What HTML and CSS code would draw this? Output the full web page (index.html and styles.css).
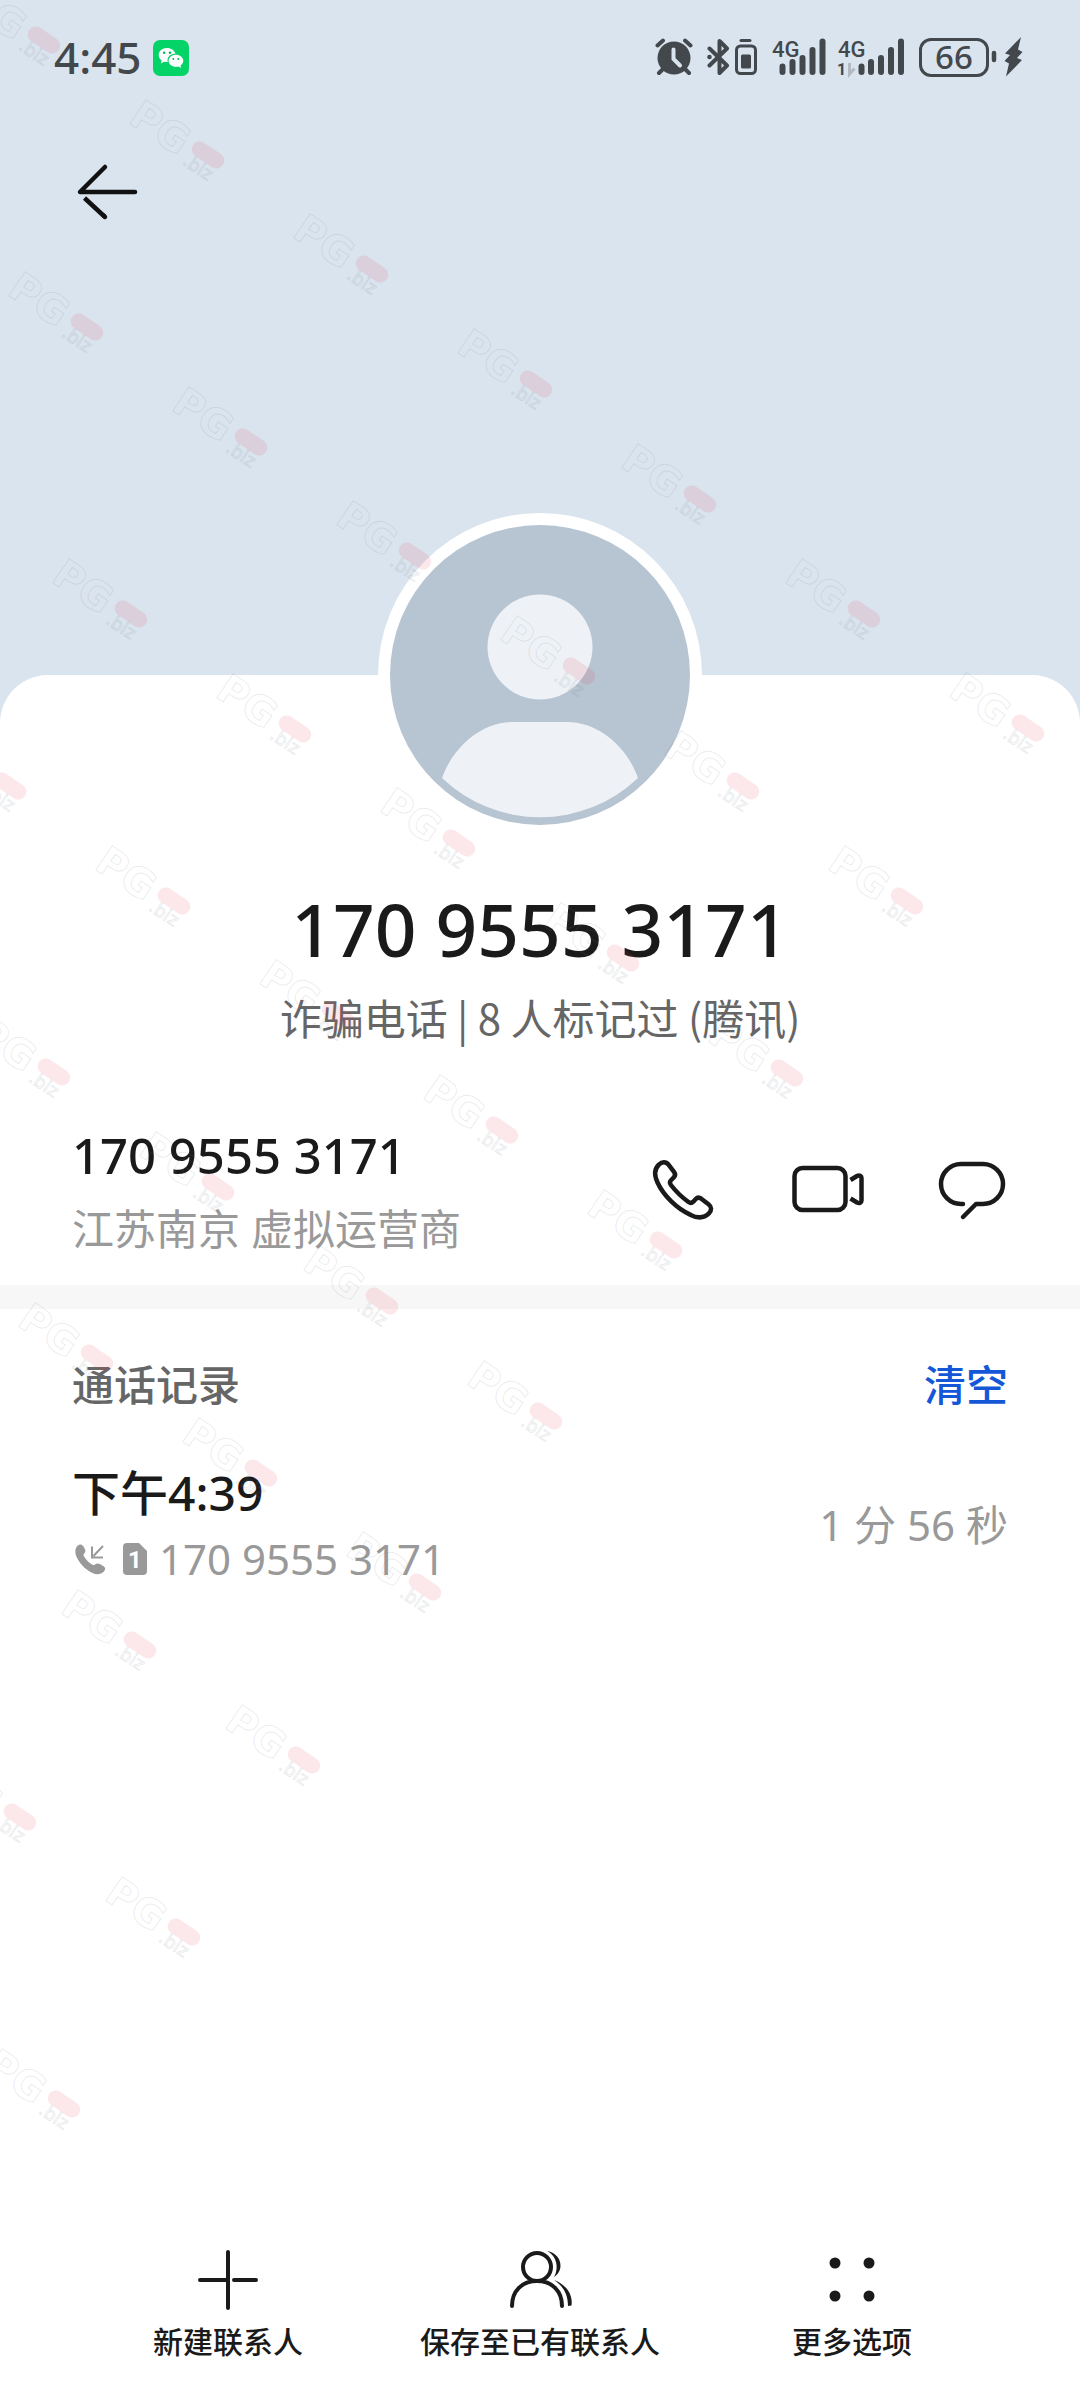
FILE: index.html
```html
<!DOCTYPE html>
<html lang="zh-CN">
<head>
<meta charset="utf-8">
<meta name="viewport" content="width=device-width, initial-scale=1">
<title>170 9555 3171</title>
<link rel="stylesheet" href="styles.css">
</head>
<body>
<div class="page">
  <header class="hero">
    <div class="status">
      <span class="clock">4:45</span>
      <svg class="wechat" width="36" height="36" viewBox="0 0 36 36" aria-label="微信">
        <rect width="36" height="36" rx="7" fill="#04d368"/>
        <path fill="#fff" d="M14 8c-4.700 0-8.300 3.100-8.300 7 0 2.200 1.100 4.100 2.900 5.400l-.8 3 3.300-1.700c.9.300 1.900.4 2.900.4h.8c-.2-.6-.3-1.200-.3-1.900 0-3.700 3.400-6.400 7.700-6.400h.2C21.500 10.400 18.100 8 14 8z"/>
        <path fill="#fff" d="M22.800 14.700c-4 0-7.200 2.700-7.200 6s3.200 6.100 7.200 6.100c.9 0 1.800-.1 2.600-.4l2.800 1.600-.7-2.600c1.700-1.200 2.800-2.900 2.800-4.700 0-3.300-3.400-6-7.500-6z"/>
        <g fill="#04b85a"><circle cx="11.200" cy="12.700" r="1.300"/><circle cx="17" cy="12.700" r="1.300"/><circle cx="20.300" cy="19" r="1"/><circle cx="25.300" cy="19" r="1"/></g>
      </svg>
      <div class="indicators">
        <svg width="38" height="38" viewBox="0 0 38 38" aria-hidden="true">
          <circle cx="19" cy="20" r="16.500" fill="#43484d"/>
          <path d="M2.500 7.500 8 2.500M35.500 7.500 30 2.500M8 31l-4 4M30 31l4 4" stroke="#43484d" stroke-width="4" stroke-linecap="round"/>
          <path d="M18.500 11.500v9.500l6.500 6.500" fill="none" stroke="#dae4ee" stroke-width="4" stroke-linecap="round"/>
        </svg>
        <svg class="bluetooth" width="50" height="38" viewBox="0 0 50 38" aria-hidden="true">
          <path d="M2.500 10.500 20 27.500 12.500 35V3L20 10.500 2.500 27.500" fill="none" stroke="#43484d" stroke-width="4" stroke-linejoin="round" stroke-linecap="round"/>
          <circle cx="2.500" cy="19" r="2.300" fill="#43484d"/>
          <path d="M34 2.500h9" stroke="#43484d" stroke-width="3" stroke-linecap="round"/>
          <rect x="29.500" y="8" width="19" height="27.500" rx="4" fill="none" stroke="#43484d" stroke-width="3"/>
          <rect x="34" y="16.500" width="10" height="14" rx="1.500" fill="#43484d"/>
        </svg>
        <svg class="signal" width="54" height="38" viewBox="0 0 54 38" aria-hidden="true">
          <text x="0" y="19" class="net">4G</text>
          <path d="M10.500 28.500v5.500M20.500 24v10M30.500 20v14M40.500 12v22M50.500 3.500v30.500" stroke="#43484d" stroke-width="6" stroke-linecap="round"/>
        </svg>
        <svg class="signal signal-two" width="67" height="38" viewBox="0 0 67 38" aria-hidden="true">
          <text x="0" y="19" class="net">4G</text>
          <text x="-1" y="37" class="slot">1</text>
          <path d="M11.500 25v11l5-5.500" fill="none" stroke="#b3bac2" stroke-width="3"/>
          <path d="M23.500 28.500v5.500M33 24v10M43 20v14M53 12v22M63 3.500v30.500" stroke="#43484d" stroke-width="6" stroke-linecap="round"/>
        </svg>
        <span class="battery">66</span>
        <svg class="charge" width="32" height="40" viewBox="0 0 32 40" aria-hidden="true">
          <path d="M3 16v7" stroke="#43484d" stroke-width="4.500" stroke-linecap="round"/>
          <path d="M30 0 14 16.500l5 1.500-5.500 6 4.500 2.500L15 39.500l16-16.500-5-2 5.500-6-4.500-2.500z" fill="#43484d"/>
        </svg>
      </div>
    </div>
    <button class="icon-button back" aria-label="返回">
      <svg width="72" height="72" viewBox="0 0 72 72" fill="none" stroke="#111" stroke-width="4.500" stroke-linecap="round" stroke-linejoin="round">
        <path d="M33 11 8 36h55"/><path d="M12.500 42 33 61" stroke-linecap="butt"/><path d="M32 60l1 1"/>
      </svg>
    </button>
  </header>

  <main class="card">
    <svg class="avatar" width="324" height="324" viewBox="0 0 324 324" role="img" aria-label="头像">
      <circle cx="162" cy="162" r="162" fill="#fff"/>
      <circle cx="162" cy="162" r="150" fill="#b7c4d2"/>
      <circle cx="162" cy="134" r="52.500" fill="#eef2f6"/>
      <path d="M64 265C74 236 102 209 135 209h54c33 0 61 27 71 56a142 142 0 0 1-196 0z" fill="#eef2f6"/>
    </svg>
    <h1 class="title">170 9555 3171</h1>
    <p class="tag">诈骗电话 | 8 人标记过 (腾讯)</p>

    <section class="contact">
      <div class="contact-text">
        <p class="number">170 9555 3171</p>
        <p class="place">江苏南京 虚拟运营商</p>
      </div>
      <div class="actions">
        <button class="icon-button" aria-label="拨打电话">
          <svg width="72" height="72" viewBox="0 0 72 72" fill="none" stroke="#1a1a1a" stroke-width="4.500" stroke-linejoin="round" stroke-linecap="round">
            <path d="M11 9.500c3-3 7-3 9.500.2l5.500 7.200c1.600 2.100 1.400 4-.4 5.800l-2.400 2.300c-1.600 1.600-1.600 3.200-.3 5 5 6.500 11 12.200 17.600 17 1.700 1.200 3.300 1.200 4.800-.3l2.200-2.500c1.700-1.800 3.700-2 5.800-.5l7.200 5.500c3.300 2.600 3.400 6.200.4 9.200-4.800 4.800-11.200 5-18.300 1.500C28.500 53.500 15.500 40.500 9.500 27.500c-3-6.500-3.300-13.500 1.500-18z"/>
          </svg>
        </button>
        <button class="icon-button" aria-label="视频通话">
          <svg width="72" height="72" viewBox="0 0 72 72" fill="none" stroke="#1a1a1a" stroke-width="4.500" stroke-linejoin="round">
            <rect x="2.500" y="13" width="51" height="42" rx="8"/>
            <path d="M58.500 25l6.500-4c2.500-1.300 4.500 0 4.500 2v22.500c0 2-2 3.300-4.500 2l-6.500-4"/>
          </svg>
        </button>
        <button class="icon-button" aria-label="发送信息">
          <svg width="72" height="72" viewBox="0 0 72 72" fill="none" stroke="#1a1a1a" stroke-width="4.500" stroke-linecap="round" stroke-linejoin="round">
            <path d="M27 49h-2a20 20 0 0 1 0-40h22a20 20 0 0 1 0 40h-7L27 62"/>
          </svg>
        </button>
      </div>
    </section>

    <section class="log">
      <div class="log-head">
        <h2>通话记录</h2>
        <button class="clear">清空</button>
      </div>
      <div class="call">
        <div>
          <p class="time">下午4:39</p>
          <p class="detail">
            <svg width="31" height="31" viewBox="0 0 31 31" aria-hidden="true">
              <path d="M2.500 1.800c2-2 4.300-1.800 5.600.2l1.800 3c.9 1.600.6 3.200-.7 4.500-1 1-.9 2 0 3.200 2 3 4.500 5.500 7.400 7.600 1.300.9 2.300.9 3.400.1 1.600-1.300 3.200-1.300 4.800-.3l3.800 2.200c2 1.300 2.100 3.300.3 5.200-3 3.100-7 3.600-11.500 1.500C10 25.500 4 19 1.200 12 -.3 8 .2 4.200 2.500 1.800z" fill="#999"/>
              <path d="M28 2 18.500 12M17 2.500v11h11" fill="none" stroke="#999" stroke-width="2"/>
            </svg>
            <svg class="sim" width="24" height="32" viewBox="0 0 24 32" aria-hidden="true">
              <path d="M4 0h12l8 8v20a4 4 0 0 1-4 4H4a4 4 0 0 1-4-4V4a4 4 0 0 1 4-4z" fill="#999"/>
              <text x="12" y="25" class="sim-number">1</text>
            </svg>
            <span>170 9555 3171</span>
          </p>
        </div>
        <p class="duration">1 分 56 秒</p>
      </div>
    </section>

    <nav class="toolbar">
      <button class="tool">
        <svg width="64" height="60" viewBox="0 0 64 60" stroke="#1a1a1a" stroke-width="4" stroke-linecap="round" aria-hidden="true">
          <path d="M32 2v56M4 30h28M38 30h22"/>
        </svg>
        <span>新建联系人</span>
      </button>
      <button class="tool">
        <svg width="64" height="60" viewBox="0 0 64 60" fill="none" stroke="#1a1a1a" stroke-width="4" stroke-linecap="round" aria-hidden="true">
          <circle cx="29" cy="17" r="14"/>
          <path d="M4 56c0-15 10-25 25-25s25 10 25 25"/>
          <path d="M39 1c16 3 17 20 7 26 5-9 3-21-7-26zM46 30c13 5 19 15 17.500 25.500L60 56c0-12-5-20-14-26z" fill="#1a1a1a" stroke="none"/>
        </svg>
        <span>保存至已有联系人</span>
      </button>
      <button class="tool">
        <svg width="64" height="60" viewBox="0 0 64 60" fill="#1a1a1a" aria-hidden="true">
          <circle cx="15" cy="13" r="5.500"/><circle cx="49" cy="13" r="5.500"/><circle cx="15" cy="46" r="5.500"/><circle cx="49" cy="46" r="5.500"/>
        </svg>
        <span>更多选项</span>
      </button>
    </nav>
  </main>

  <svg class="watermark" aria-hidden="true">
    <defs>
      <g id="mark">
        <g transform="rotate(34)">
          <text class="mark-name" x="-86" y="18">PG</text>
          <text class="mark-suffix" x="-17" y="22">.biz</text>
          <rect class="mark-pill" x="-18" y="-8" width="36" height="16" rx="8"/>
        </g>
      </g>
    </defs>
    <g transform="translate(44 40)">
      <use href="#mark"/><use href="#mark" x="164" y="115"/><use href="#mark" x="328" y="229"/><use href="#mark" x="492" y="344"/><use href="#mark" x="656" y="459"/><use href="#mark" x="820" y="574"/><use href="#mark" x="984" y="688"/>
    </g>
    <g transform="translate(87 327)">
      <use href="#mark"/><use href="#mark" x="164" y="115"/><use href="#mark" x="328" y="229"/><use href="#mark" x="492" y="344"/><use href="#mark" x="656" y="459"/><use href="#mark" x="820" y="574"/>
    </g>
    <g transform="translate(131 614)">
      <use href="#mark"/><use href="#mark" x="164" y="115"/><use href="#mark" x="328" y="229"/><use href="#mark" x="492" y="344"/><use href="#mark" x="656" y="459"/>
    </g>
    <g transform="translate(10 786)">
      <use href="#mark"/><use href="#mark" x="164" y="115"/><use href="#mark" x="328" y="229"/><use href="#mark" x="492" y="344"/><use href="#mark" x="656" y="459"/>
    </g>
    <g transform="translate(54 1072)">
      <use href="#mark"/><use href="#mark" x="164" y="115"/><use href="#mark" x="328" y="229"/><use href="#mark" x="492" y="344"/>
    </g>
    <g transform="translate(97 1358)">
      <use href="#mark"/><use href="#mark" x="164" y="115"/><use href="#mark" x="328" y="229"/>
    </g>
    <g transform="translate(140 1645)">
      <use href="#mark"/><use href="#mark" x="164" y="115"/>
    </g>
    <g transform="translate(20 1817)">
      <use href="#mark"/><use href="#mark" x="164" y="115"/>
    </g>
    <g transform="translate(64 2104)">
      <use href="#mark"/>
    </g>
  </svg>
</div>
</body>
</html>
```

FILE: styles.css
```css
* {
  box-sizing: border-box;
}

body {
  margin: 0;
  font-family: "Noto Sans", "Noto Sans CJK SC", sans-serif;
  color: #1a1a1a;
  background: #dae4ee;
}

h1, h2, p {
  margin: 0;
  font-weight: 400;
}

button {
  margin: 0;
  padding: 0;
  border: 0;
  background: none;
  color: inherit;
  font: inherit;
}

svg {
  display: block;
  flex: none;
}

.page {
  position: relative;
  display: flex;
  flex-direction: column;
  min-height: 100vh;
  overflow: hidden;
}

.hero {
  min-height: 675px;
}

.status {
  display: flex;
  align-items: center;
  height: 114px;
  padding: 0 57px 0 54px;
  color: #43484d;
}

.clock {
  font-size: 44px;
  font-weight: 500;
  line-height: 60px;
}

.wechat {
  margin-left: 12px;
  margin-top: 2px;
}

.indicators {
  display: flex;
  align-items: center;
  margin-left: auto;
}

.bluetooth {
  margin-left: 14px;
}

.signal {
  margin-left: 15px;
  overflow: visible;
}

.signal-two {
  margin-left: 12px;
}

.net {
  font: 500 22px Roboto, sans-serif;
  fill: #43484d;
}

.slot {
  font: 700 16px Roboto, sans-serif;
  fill: #43484d;
}

.battery {
  width: 70px;
  height: 39px;
  margin-left: 14px;
  border: 3px solid #43484d;
  border-radius: 12px;
  font-size: 33px;
  font-weight: 500;
  line-height: 32px;
  text-align: center;
}

.charge {
  margin-left: 2px;
}

.icon-button {
  display: block;
  width: 72px;
  height: 72px;
}

.back {
  margin: 42px 72px 0;
}

.card {
  flex: 1;
  display: flex;
  flex-direction: column;
  border-radius: 48px 48px 0 0;
  background: #fff;
}

.avatar {
  align-self: center;
  margin-top: -162px;
}

.title {
  margin-top: 44px;
  font-size: 73px;
  font-weight: 500;
  line-height: 96px;
  text-align: center;
}

.tag {
  margin-top: 10px;
  font-family: "Noto Sans CJK SC", sans-serif;
  font-size: 42px;
  line-height: 60px;
  text-align: center;
  color: #666;
}

.contact {
  display: flex;
  align-items: center;
  justify-content: space-between;
  margin-top: 76px;
  padding: 0 72px 26px;
  border-bottom: 24px solid #f7f7f7;
}

.number {
  font-size: 49px;
  font-weight: 500;
  line-height: 64px;
}

.place {
  margin-top: 12px;
  font-size: 42px;
  line-height: 60px;
  color: #999;
}

.actions {
  display: flex;
  gap: 72px;
}

.log {
  padding: 46px 72px;
}

.log-head {
  display: flex;
  justify-content: space-between;
  font-size: 42px;
  line-height: 60px;
}

.log-head h2 {
  font-size: 42px;
  font-weight: 500;
  color: #666;
}

.clear {
  font-weight: 500;
  color: #1458d8;
}

.call {
  display: flex;
  align-items: center;
  justify-content: space-between;
  margin-top: 46px;
}

.time {
  font-size: 48px;
  font-weight: 500;
  line-height: 64px;
}

.detail {
  display: flex;
  align-items: center;
  margin-top: 4px;
  padding-left: 3px;
  font-size: 42px;
  line-height: 60px;
  color: #999;
}

.sim {
  margin: 0 12px 0 17px;
}

.sim-number {
  font: 700 24px Roboto, sans-serif;
  fill: #fff;
  text-anchor: middle;
}

.duration {
  font-size: 42px;
  line-height: 60px;
  color: #999;
}

.toolbar {
  display: grid;
  grid-template-columns: repeat(3, 1fr);
  margin-top: auto;
  padding: 0 72px 26px;
}

.tool {
  display: flex;
  flex-direction: column;
  align-items: center;
  gap: 12px;
  font-size: 30px;
  font-weight: 500;
  line-height: 40px;
  white-space: nowrap;
}

.watermark {
  position: absolute;
  inset: 0;
  width: 100%;
  height: 100%;
  pointer-events: none;
}

.mark-name,
.mark-suffix {
  font-family: "DejaVu Sans", sans-serif;
  fill: none;
  stroke: #78828c;
  stroke-opacity: 0.16;
}

.mark-name {
  font-size: 40px;
  font-weight: 700;
}

.mark-suffix {
  font-size: 18px;
}

.mark-pill {
  fill: #e63c50;
  fill-opacity: 0.12;
}
```
